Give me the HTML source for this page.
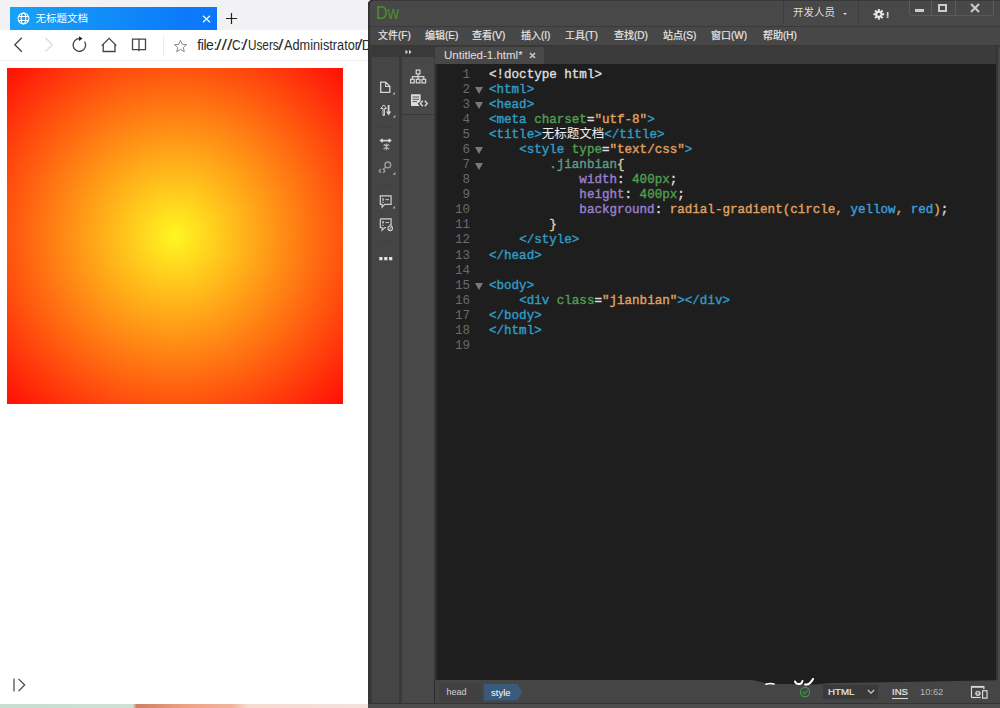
<!DOCTYPE html>
<html><head><meta charset="utf-8">
<style>
*{box-sizing:border-box;margin:0;padding:0}
html,body{width:1000px;height:708px;overflow:hidden;background:#fff}
body{position:relative;font-family:"Liberation Sans","Noto Sans CJK SC",sans-serif}
.abs{position:absolute}
/* browser */
#br{left:0;top:0;width:369px;height:703.500px;background:#fff;overflow:hidden}
#tabs{left:0;top:0;width:369px;height:30px;background:#f2f2f5}
#tab{left:10px;top:7px;width:207px;height:23px;background:linear-gradient(90deg,#18a2f6,#0b7afa 85%,#0b78fb);color:#fff;font-size:10.5px;line-height:23px}
#addr{left:0;top:30px;width:369px;height:31px;background:#fff;border-bottom:1px solid #ececec}
#url{left:197px;top:37.300px;font-size:14px;color:#2a2a2a;white-space:nowrap;line-height:17px}
#grad{left:7px;top:68px;width:336px;height:336px;background:radial-gradient(circle,#fff622,#ff0e06)}
#wall{left:0;top:703.500px;width:369px;height:4.500px;background:linear-gradient(90deg,#c6ddd0 0,#cfe0d4 36%,#cf8064 37%,#eea184 50%,#f2b49e 63%,#f6d9d0 67%,#f5e2dc)}
/* dw */
#dw{left:368px;top:0;width:632px;height:708px;background:#454545;overflow:hidden;color:#ddd}
#title{left:0;top:0;width:632px;height:26px;background:#484848}
#menu{left:0;top:25.500px;width:632px;height:19.500px;background:#474747;font-size:10px;-webkit-text-stroke:0.200px #e6e6e6;color:#e6e6e6;line-height:20px;border-top:1px solid #3a3a3a}
#menu span{position:absolute;top:-0.800px;white-space:nowrap}
#code{left:67px;top:64px;width:561px;height:616px;background:#1e1e1e}

.ln{position:absolute;left:0;height:15px;width:565px;margin-top:3.5px}
.no{position:absolute;right:530px;top:0;font-family:"Liberation Mono",monospace;font-size:12.5px;line-height:15px;color:#6a6a6a;text-align:right}
.fd{position:absolute;left:40px;top:4.5px;border:4px solid transparent;border-top:7px solid #7a7a7a;border-bottom:0}
pre{position:absolute;left:54px;top:0;font-family:"Liberation Mono","Noto Sans CJK SC",monospace;font-size:12.550px;line-height:15px;font-weight:normal;-webkit-text-stroke:0.4px currentColor;color:#ddd;white-space:pre;height:15px}
.ct{color:#2f9cc4}.ca{color:#4f9e4f}.cs{color:#e0a060}.cw{color:#dcdcdc}.cc{color:#f0f0f0;font-weight:normal;line-height:0;-webkit-text-stroke:0;font-family:"Noto Sans CJK SC",sans-serif;font-size:12.5px}
.cq{color:#5e9a88}.cb{color:#d8cfa8}.cp{color:#9a7fd0}.ck{color:#3d9fd8}
#url span{position:absolute;top:0;transform-origin:0 0;letter-spacing:0}
</style></head><body>
<div id="br" class="abs">
 <div id="tabs" class="abs"></div>
 <div id="tab" class="abs"><span class="abs" style="left:25.500px;top:0">无标题文档</span>
  <svg class="abs" style="left:7px;top:5px" width="13" height="13" viewBox="0 0 13 13" fill="none" stroke="#fff" stroke-width="1.100"><circle cx="6.500" cy="6.500" r="5.400"/><ellipse cx="6.500" cy="6.500" rx="2.300" ry="5.400"/><path d="M1.500 4.500h10M1.500 8.500h10" stroke-width="1"/></svg>
  <svg class="abs" style="left:192px;top:8px" width="9" height="8" viewBox="0 0 9 8"><path d="M1 .700l7 6.600M8 .700l-7 6.600" stroke="#eef4ff" stroke-width="1.300" fill="none"/></svg>
 </div>
 <svg class="abs" style="left:226px;top:13px" width="11" height="11" viewBox="0 0 11 11"><path d="M5.500 0v11M0 5.500h11" stroke="#222" stroke-width="1.200"/></svg>
 <div id="addr" class="abs"></div>
 <svg class="abs" style="left:0;top:30px" width="200" height="31" viewBox="0 30 200 31" fill="none" stroke="#444" stroke-width="1.300">
  <path d="M21.800 37.800l-7 7 7 7"/>
  <path d="M45.300 37.800l7 7-7 7" stroke="#dcdcdc"/>
  <path d="M84.600 41.500a6.300 6.300 0 1 1-5-2.800"/><path d="M79 36.300l3.600 2.300-3.600 2.300z" fill="#222" stroke="none"/>
  <path d="M101.800 45.600l7.300-7.200 7.300 7.200M103.200 44.500v7h11.800v-7"/>
  <path d="M139 39.200h-6.500v10.500h6.500zM139 39.200h6.500v10.500h-6.500M139 49.700v1.500"/>
  <path d="M163.500 36v20" stroke="#ececec" stroke-width="1"/>
  <path d="M180.500 40.300l1.800 4 4.200.4-3.200 2.800 1 4.200-3.800-2.300-3.800 2.300 1-4.200-3.200-2.800 4.200-.4z" stroke="#8a8a8a" stroke-width="1"/>
 </svg>
 <div id="url" class="abs"><span style="left:0.200px;letter-spacing:-0.400px">file:</span><span style="left:18.600px;transform:scaleX(1.400)">///</span><span style="left:34.500px;transform:scaleX(0.850)">C:</span><span style="left:45px;transform:scaleX(1.400)">/</span><span style="left:50.600px;transform:scaleX(0.840)">Users</span><span style="left:81px;transform:scaleX(1.400)">/</span><span style="left:86.500px;transform:scaleX(0.910)">Administrator</span><span style="left:160.400px;transform:scaleX(1.400)">/</span><span style="left:164.800px">Desktop</span></div>
 <div id="grad" class="abs"></div>
 <svg class="abs" style="left:12px;top:677px" width="16" height="16" viewBox="0 0 16 16" fill="none" stroke="#444" stroke-width="1.200"><path d="M2 1.500v13M6.500 1.800l6.200 6.200-6.200 6.200"/></svg>
</div>
<div id="wall" class="abs"></div>
<div id="dw" class="abs">
 <div id="title" class="abs"></div>
 <div class="abs" style="left:0;top:0;width:632px;height:1px;background:#383838"></div>
 <div class="abs" style="left:8px;top:0px;font-size:18.300px;line-height:26px;color:#4f8e2a;transform:scaleX(0.870);transform-origin:0 0">Dw</div>
 <div class="abs" style="left:415px;top:0;width:1px;height:24px;background:#3c3c3c"></div>
 <div class="abs" style="left:490px;top:0;width:1px;height:24px;background:#3c3c3c"></div>
 <div class="abs" style="left:425px;top:5px;font-size:10.5px;line-height:14px;color:#ddd;white-space:nowrap">开发人员</div>
 <div class="abs" style="left:475px;top:13px;border:2.200px solid transparent;border-top:2.600px solid #ddd;border-bottom:0"></div>
 <svg class="abs" style="left:505px;top:8px" width="21.600" height="12.600" viewBox="0 0 24 14"><g fill="#e8e8e8"><circle cx="6.5" cy="7" r="4"/><g stroke="#e8e8e8" stroke-width="2.2"><path d="M6.5 1v12M.5 7h12M2.3 2.8l8.4 8.4M10.7 2.8l-8.4 8.4"/></g><circle cx="6.5" cy="7" r="1.7" fill="#484848"/></g><text x="14.5" y="11.5" font-family="Liberation Sans" font-weight="bold" font-size="11" fill="#e8e8e8">!</text></svg>
 <div class="abs" style="left:541px;top:-1px;width:85px;height:17px;border:1px solid #5a5a5a;border-radius:0 0 2px 2px"></div>
 <div class="abs" style="left:563px;top:0;width:1px;height:16px;background:#5a5a5a"></div>
 <div class="abs" style="left:587px;top:0;width:1px;height:16px;background:#5a5a5a"></div>
 <div class="abs" style="left:547px;top:9px;width:9px;height:3px;background:#ccc"></div>
 <div class="abs" style="left:570px;top:4px;width:9px;height:8px;border:2px solid #ccc;border-top-width:2px"></div>
 <svg class="abs" style="left:602px;top:3px" width="10" height="10" viewBox="0 0 10 10"><path d="M1 1l8 8M9 1l-8 8" stroke="#ccc" stroke-width="2" fill="none"/></svg>
 <div id="menu" class="abs"><span style="left:10px">文件(F)</span><span style="left:57px">编辑(E)</span><span style="left:104px">查看(V)</span><span style="left:153px">插入(I)</span><span style="left:197px">工具(T)</span><span style="left:246px">查找(D)</span><span style="left:295px">站点(S)</span><span style="left:343px">窗口(W)</span><span style="left:395px">帮助(H)</span></div>
 <div class="abs" style="left:0;top:45px;width:632px;height:2px;background:#383838"></div>
 <!-- tab row -->
 <div class="abs" style="left:4px;top:47px;width:628px;height:17px;background:#3b3b3b"></div>
 <div class="abs" style="left:4px;top:47px;width:63px;height:10px;background:#393939"></div>
 <svg class="abs" style="left:37px;top:49px" width="8" height="6" viewBox="0 0 8 6"><path d="M.500 .800l2.600 2.200-2.600 2.200zM4 .800l2.600 2.200-2.600 2.200z" fill="#d0d0d0"/></svg>
 <div class="abs" style="left:67px;top:47px;width:109px;height:17px;background:#484848;font-size:11.5px;line-height:17px;color:#e0e0e0;white-space:nowrap"><span class="abs" style="left:9px;top:0">Untitled-1.html*</span><svg class="abs" style="left:94px;top:5px" width="7" height="7" viewBox="0 0 7 7"><path d="M1 1l5 5M6 1l-5 5" stroke="#c4c4c4" stroke-width="1.700" fill="none"/></svg></div>
 <!-- left cols -->
 <div class="abs" style="left:0;top:47px;width:4px;height:661px;background:#3a3a3a"></div>
 <div class="abs" style="left:0;top:0;width:2px;height:708px;background:#343434"></div>
 <svg class="abs" style="left:0;top:0" width="5" height="5" viewBox="0 0 5 5"><path d="M0 0h5q-5 0-5 5z" fill="#f2f2f5"/><path d="M.500 5q0-4.500 4.500-4.500" stroke="#2c2c2c" stroke-width="1.400" fill="none"/></svg>
 <div class="abs" style="left:628px;top:47px;width:2px;height:657px;background:#363636"></div>
 <div class="abs" style="left:630px;top:47px;width:2px;height:657px;background:#474747"></div>
 <div class="abs" style="left:4px;top:57px;width:27px;height:647px;background:#454545"></div>
 <div class="abs" style="left:31px;top:57px;width:3px;height:647px;background:#3a3a3a"></div>
 <div class="abs" style="left:34px;top:57px;width:32px;height:647px;background:#484848"></div>
 <div class="abs" style="left:66px;top:64px;width:2px;height:640px;background:#2c2c2c"></div>
 <div class="abs" style="left:34px;top:114px;width:32px;height:1px;background:#383838"></div>
<svg class="abs" style="left:4px;top:57px" width="63" height="230" viewBox="372 57 63 230" fill="none" stroke="#d8d8d8" stroke-width="1.3">
<!-- file -->
<path d="M380.700 82.200h5l4.100 4.100v6h-9.100z"/><path d="M385.600 82.400v4.100h4.100" stroke-width="1.100"/>
<path d="M395 92v2.6h-2.6z" fill="#b8b8b8" stroke="none"/>
<!-- updown -->
<path d="M383 115.5v-7h-2.2l2.9-3.6 2.9 3.6h-2.2v7z" stroke-width="1"/>
<path d="M388.6 105v8" stroke-width="1.8"/><path d="M386 111.5h5.2l-2.6 4z" fill="#d8d8d8" stroke="none"/>
<path d="M395.4 115v2.6h-2.6z" fill="#b8b8b8" stroke="none"/>
<!-- sitemap -->
<g stroke-width="1.2"><rect x="416.2" y="70.1" width="3.8" height="3.8"/><rect x="410.6" y="79.3" width="3.6" height="3.6"/><rect x="416.3" y="79.3" width="3.6" height="3.6"/><rect x="422" y="79.3" width="3.6" height="3.6"/>
<path d="M418.1 74v5.3M412.4 79.3v-2.7h11.4v2.7"/></g>
<!-- doc code -->
<path d="M411 94.2h9.6v7l-3 2.3 2 2.6h-8.6z" fill="#dcdcdc" stroke="none"/>
<path d="M412.5 97h6.5M412.5 99.3h6.5M412.5 101.6h4.5" stroke="#555" stroke-width="1"/>
<path d="M422.800 100.800l-2.400 2.700 2.400 2.700M424.800 100.800l2.400 2.700-2.400 2.700" stroke-width="1.400"/>
<!-- expand h -->
<g transform="translate(-1.600 0)"><path d="M383.500 140.600h7.500" stroke-width="1.600"/><path d="M384.200 138.200l-3.100 2.400 3.100 2.400zM390.300 138.200l3.100 2.400-3.100 2.400z" fill="#e4e4e4" stroke="none"/>
<path d="M385 145.200h6M385 148.200h6M388 143.400v7M385.800 144l4.400 5.600M390.200 144l-4.400 5.600" stroke-width="0.900" stroke="#bdbdbd"/></g>
<!-- wand -->
<g stroke="#a0a0a0" stroke-width="1.300" transform="translate(-2.200 0.400)"><circle cx="390" cy="164.500" r="2.900"/><path d="M388 166.700l-3 2.600"/><path d="M383 168.500l-1.500 2 1.500 2M385.500 168.500l1.500 2-1.500 2" stroke-width="1.400"/></g>
<path d="M395.400 172v2.800h-2.800z" fill="#b0b0b0" stroke="none"/>
<!-- comment 1 -->
<g stroke="#cfcfcf" stroke-width="1.2" transform="translate(0 1.200)"><path d="M380.300 194.600h10.800v8.600h-6.400l-2.600 2.800v-2.800h-1.800z"/><path d="M383 197v2.500M383 200.600v1" stroke-width="1.400"/><path d="M385.500 198.500h3.500" stroke-width="1"/></g>
<path d="M395 205.800v2.600h-2.600z" fill="#a8a8a8" stroke="none"/>
<!-- comment 2 -->
<g stroke="#cfcfcf" stroke-width="1.200" transform="translate(0 0.600)"><path d="M380.300 218.300h10.800v6h-1.500M386 226.900h-1.300l-2.600 2.800v-2.800h-1.800v-8.600"/><path d="M383 220.500v2.500M383 224.200v1" stroke-width="1.400"/><path d="M385.500 222h3.500" stroke-width="1"/><circle cx="390.200" cy="227.700" r="2.300" stroke-width="1.100"/><path d="M388.600 229.300l3.200-3.200" stroke-width="1"/></g>
<path d="M377 127.500h18M377 185.500h18M377 241.500h18" stroke="#414141" stroke-width="1"/>
<!-- dots -->
<path d="M379.300 257h3.200v3.200h-3.200zM384.200 257h3.200v3.200h-3.200zM389.100 257h3.200v3.200h-3.200z" fill="#e4e4e4" stroke="none"/>
</svg>
 <div id="code" class="abs">
<div class="ln" style="top:0.00px"><span class="no">1</span><pre><span class="cw">&lt;!doctype html&gt;</span></pre></div>
<div class="ln" style="top:15.09px"><span class="no">2</span><i class="fd"></i><pre><span class="ct">&lt;html&gt;</span></pre></div>
<div class="ln" style="top:30.18px"><span class="no">3</span><i class="fd"></i><pre><span class="ct">&lt;head&gt;</span></pre></div>
<div class="ln" style="top:45.27px"><span class="no">4</span><pre><span class="ct">&lt;meta</span> <span class="ca">charset</span><span class="cw">=</span><span class="cs">"utf-8"</span><span class="ct">&gt;</span></pre></div>
<div class="ln" style="top:60.36px"><span class="no">5</span><pre><span class="ct">&lt;title&gt;</span><span class="cc">无标题文档</span><span class="ct">&lt;/title&gt;</span></pre></div>
<div class="ln" style="top:75.45px"><span class="no">6</span><i class="fd"></i><pre>    <span class="ct">&lt;style</span> <span class="ca">type</span><span class="cw">=</span><span class="cs">"text/css"</span><span class="ct">&gt;</span></pre></div>
<div class="ln" style="top:90.54px"><span class="no">7</span><i class="fd"></i><pre>        <span class="cq">.jianbian</span><span class="cb">{</span></pre></div>
<div class="ln" style="top:105.63px"><span class="no">8</span><pre>            <span class="cp">width</span><span class="cw">:</span> <span class="ca">400px</span><span class="cw">;</span></pre></div>
<div class="ln" style="top:120.72px"><span class="no">9</span><pre>            <span class="cp">height</span><span class="cw">:</span> <span class="ca">400px</span><span class="cw">;</span></pre></div>
<div class="ln" style="top:135.81px"><span class="no">10</span><pre>            <span class="cp">background</span><span class="cw">:</span> <span class="cs">radial-gradient(circle,</span> <span class="ck">yellow</span><span class="cs">,</span> <span class="ck">red</span><span class="cs">)</span><span class="cw">;</span></pre></div>
<div class="ln" style="top:150.90px"><span class="no">11</span><pre>        <span class="cb">}</span></pre></div>
<div class="ln" style="top:165.99px"><span class="no">12</span><pre>    <span class="ct">&lt;/style&gt;</span></pre></div>
<div class="ln" style="top:181.08px"><span class="no">13</span><pre><span class="ct">&lt;/head&gt;</span></pre></div>
<div class="ln" style="top:196.17px"><span class="no">14</span><pre></pre></div>
<div class="ln" style="top:211.26px"><span class="no">15</span><i class="fd"></i><pre><span class="ct">&lt;body&gt;</span></pre></div>
<div class="ln" style="top:226.35px"><span class="no">16</span><pre>    <span class="ct">&lt;div</span> <span class="ca">class</span><span class="cw">=</span><span class="cs">"jianbian"</span><span class="ct">&gt;&lt;/div&gt;</span></pre></div>
<div class="ln" style="top:241.44px"><span class="no">17</span><pre><span class="ct">&lt;/body&gt;</span></pre></div>
<div class="ln" style="top:256.53px"><span class="no">18</span><pre><span class="ct">&lt;/html&gt;</span></pre></div>
<div class="ln" style="top:271.62px"><span class="no">19</span><pre></pre></div>
</div>
 <div class="abs" style="left:66px;top:64px;width:4px;height:616px;background:linear-gradient(90deg,#404040,#2b2b2b 50%,#1e1e1e)"></div>
 <!-- status -->
 <div class="abs" style="left:67px;top:680px;width:565px;height:24px;background:#454545"></div>
<!-- status items -->
 <div class="abs" style="left:71px;top:683px;width:43px;height:19px;background:#404040;color:#d4d4d4;font-size:9px;line-height:18px"><span class="abs" style="left:7.500px;top:0">head</span></div>
 <svg class="abs" style="left:116px;top:684px" width="40" height="17" viewBox="0 0 40 17"><path d="M0 0h33.500l4.800 8.250-4.800 8.250h-33.500z" fill="#3b597b"/><text x="7" y="11.800" font-family="Liberation Sans" font-size="9.500" fill="#ffffff">style</text></svg>
 <svg class="abs" style="left:380px;top:679px" width="250" height="8" viewBox="748 679 250 8"><path d="M750 679.500L768 683.800 815 684.600 832 683 900 682 996 680.300V679z" fill="#1f1f1f"/></svg>
 <svg class="abs" style="left:392px;top:678px" width="60" height="9" viewBox="760 678 60 9"><path d="M766 684.200q4-1.200 8-.200" stroke="#fff" stroke-width="1.600" fill="none" stroke-linecap="round"/><path d="M795 681.500q1 3 5 2.500 2-.500 2.500-3M805 684.500q3 .500 5-1.500 2-2 3-4" stroke="#fff" stroke-width="2" fill="none" stroke-linecap="round"/></svg>
 <svg class="abs" style="left:431px;top:686px" width="12" height="12" viewBox="0 0 12 12"><circle cx="6" cy="6" r="4.600" fill="none" stroke="#3f9a45" stroke-width="1.100"/><path d="M3.700 6.200l1.700 1.700 3-3.600" stroke="#3f9a45" stroke-width="1.100" fill="none"/></svg>
 <div class="abs" style="left:455px;top:685px;width:54.500px;height:14px;background:#3a3a3a;color:#e8e8e8;font-size:9.700px;line-height:13.400px;-webkit-text-stroke:0.200px #e8e8e8"><span class="abs" style="left:5px;top:0">HTML</span></div>
 <svg class="abs" style="left:499px;top:689px" width="8" height="6" viewBox="0 0 8 6"><path d="M.800 1l3.200 3.200 3.200-3.200" stroke="#ccc" stroke-width="1.200" fill="none"/></svg>
 <div class="abs" style="left:524px;top:685px;color:#e6e6e6;font-size:9.500px;line-height:13px;border-bottom:1px solid #ddd;padding:0;-webkit-text-stroke:0.200px #e6e6e6">INS</div>
 <div class="abs" style="left:552px;top:684.700px;color:#b8b8b8;font-size:9.300px;line-height:14px">10:62</div>
 <svg class="abs" style="left:601.500px;top:685px" width="18.500" height="14.800" viewBox="0 0 20 16" fill="none" stroke="#d8d8d8"><path d="M1.600 13.500v-11.900h13.400v3" stroke-width="1.300"/><path d="M1.600 2h13.400" stroke-width="2"/><path d="M1.600 13.500h10" stroke-width="1.300"/><rect x="13.600" y="6.200" width="4.800" height="8" stroke-width="1.300"/><circle cx="8.600" cy="9" r="2.900" fill="#d8d8d8" stroke="none"/><path d="M7 8.500h3M8.600 7v4" stroke="#454545" stroke-width=".8"/></svg>
 <div class="abs" style="left:0;top:704px;width:632px;height:4px;background:#4d4d4d"></div>
 <div class="abs" style="left:0;top:703px;width:632px;height:1px;background:#333"></div>
</div>
</body></html>
